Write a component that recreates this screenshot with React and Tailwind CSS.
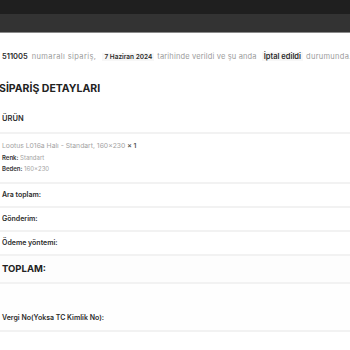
import React from 'react'

function Row({ children, className = '' }) {
  return (
    <div className={`border-b-2 border-[#f2f2f2] flex items-center ${className}`}>
      {children}
    </div>
  )
}

export default function App() {
  return (
    <div className="w-[350px] h-[350px] overflow-hidden bg-white" style={{ fontFamily: 'Inter, "Noto Sans", sans-serif' }}>
      {/* header */}
      <div className="h-[14px] bg-[#1f1f1f]" />
      <div className="h-[19px] bg-[#333333] border-b border-[#8a8a8a]" />

      <div className="pl-[2px] pt-[19px] text-[7.5px] whitespace-nowrap text-[#9b9b9b] leading-[10px]">
        <mark className="bg-transparent text-[#2b2b2b] font-semibold">511005</mark>
        <span className="ml-[4px] tracking-[0.4px]">numaralı sipariş,</span>
        <mark className="ml-[6px] bg-[#f7f7f7] px-[2px] text-[#2b2b2b] font-semibold text-[6.5px]">7 Haziran 2024</mark>
        <span className="ml-[3px] tracking-[0.15px]">tarihinde verildi ve şu anda</span>
        <mark className="ml-[5px] bg-[#f7f7f7] px-[2px] text-[#2b2b2b] font-semibold">İptal edildi</mark>
        <span className="ml-[3px] tracking-[0.3px]">durumunda.</span>
      </div>

      <h2 className="ml-[-1px] mt-[20px] text-[10.5px] font-bold text-[#222] leading-[14px]">SİPARİŞ DETAYLARI</h2>

      <div className="mt-[6px]">
        <Row className="h-[32px] pl-[2px] pt-[4px]">
          <span className="text-[7.5px] font-semibold text-[#2b2b2b]">ÜRÜN</span>
        </Row>
        <Row className="h-[50px] pl-[2px] !items-start flex-col">
          <div className="mt-[7px] text-[6.8px] text-[#a3a3a3] leading-[10px]">
            Lootus L016a Halı - Standart, 160x230 <strong className="font-semibold text-[#555]">× 1</strong>
          </div>
          <div className="mt-[3px] text-[6px] leading-[8px] text-[#a3a3a3]">
            <strong className="font-semibold text-[#333]">Renk:</strong> Standart
          </div>
          <div className="mt-[3px] text-[6px] leading-[8px] text-[#a3a3a3]">
            <strong className="font-semibold text-[#333]">Beden:</strong> 160x230
          </div>
        </Row>
        <Row className="h-[24px] pl-[2px]">
          <span className="text-[7px] font-semibold text-[#2b2b2b]">Ara toplam:</span>
        </Row>
        <Row className="h-[24px] pl-[2px]">
          <span className="text-[7px] font-semibold text-[#2b2b2b]">Gönderim:</span>
        </Row>
        <Row className="h-[24px] pl-[2px]">
          <span className="text-[7px] font-semibold text-[#2b2b2b]">Ödeme yöntemi:</span>
        </Row>
        <Row className="h-[28px] pl-[2px] bg-[#fdfdfd]">
          <span className="text-[9.5px] font-bold text-[#222]">TOPLAM:</span>
        </Row>
        <Row className="h-[48px] pl-[2px] !items-end pb-[7px] bg-[#fefefe]">
          <span className="text-[7px] font-semibold text-[#2b2b2b]">Vergi No(Yoksa TC Kimlik No):</span>
        </Row>
      </div>
    </div>
  )
}
